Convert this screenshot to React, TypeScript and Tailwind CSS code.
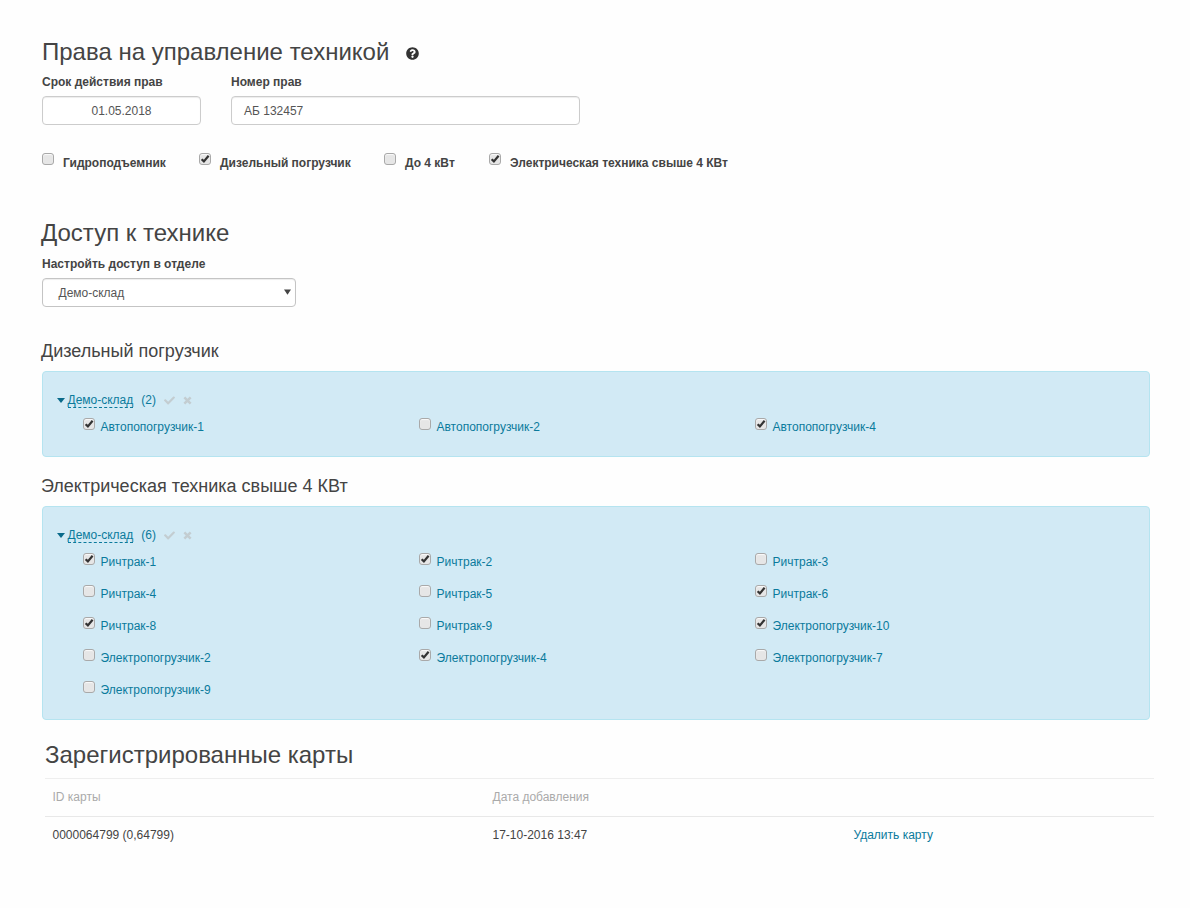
import { FaCheck, FaQuestionCircle } from "react-icons/fa";

const font = { fontFamily: '"Liberation Sans", Arial, sans-serif' };

function Box({ checked }: { checked?: boolean }) {
  return (
    <span className="relative block w-[12px] h-[12px] shrink-0 rounded-[3px] border border-[#a9a9a9] bg-[#e6e6e6] shadow-[inset_0_1px_1px_rgba(255,255,255,0.8)]">
      {checked && (
        <svg viewBox="0 0 12 12" className="absolute left-[-1px] top-[-1px] w-[12px] h-[12px]">
          <path d="M2.6 6.2 L4.9 8.4 L9.6 2.8" fill="none" stroke="#333333" strokeWidth="2.2" />
        </svg>
      )}
    </span>
  );
}

function Machine({ name, checked }: { name: string; checked?: boolean }) {
  return (
    <div className="flex h-[32px] items-start">
      <Box checked={checked} />
      <span className="ml-[5.5px] text-[12px] leading-[18px] text-[#0a7a9c]">{name}</span>
    </div>
  );
}

function Group({ count, items, tall }: { count: number; items: [string, boolean][]; tall?: boolean }) {
  return (
    <div className={`ml-[42px] mr-[40px] rounded-[4px] border border-[#b5e4f0] bg-[#d2eaf5] pl-[14px] pt-[20px] ${tall ? "h-[214px]" : "h-[86px]"}`}>
      <div className="flex items-center h-[18px] text-[12px] text-[#0a7a9c]">
        <svg viewBox="0 0 8 5" className="w-[8px] h-[5px] mr-[2.5px] mb-[2px]">
          <path d="M0 0H8L4 5Z" fill="#0a6a8a" />
        </svg>
        <span className="border-b border-dashed border-[#0a7a9c] leading-[13px]">Демо-склад</span>
        <span className="ml-[8px] mb-[2px]">({count})</span>
        <FaCheck className="ml-[8px] mb-[2px] w-[11px] h-[11px] text-[#c3cdd1]" />
        <svg viewBox="0 0 10 10" className="ml-[8.5px] mb-[2px] w-[9px] h-[9px]">
          <path d="M1.5 1.5 L8.5 8.5 M8.5 1.5 L1.5 8.5" fill="none" stroke="#c3cdd1" strokeWidth="2.8" />
        </svg>
      </div>
      <div className="grid grid-cols-[336px_336px_336px] pl-[26px] mt-[8px]">
        {items.map(([n, c]) => (
          <Machine key={n} name={n} checked={c} />
        ))}
      </div>
    </div>
  );
}

function Check({ label, checked, w }: { label: string; checked?: boolean; w: string }) {
  return (
    <div className={`flex items-start ${w}`}>
      <Box checked={checked} />
      <span className="ml-[9px] mt-[2px] text-[12px] leading-[16px] font-bold text-[#444444]">{label}</span>
    </div>
  );
}

export default function App() {
  return (
    <div style={font} className="w-[1190px] h-[908px] bg-[#fefefe] text-[#444444] overflow-hidden">
      <div className="pl-[42px] pt-[38px]">
        <h3 className="flex items-center text-[24px] leading-[28px] h-[28px] text-[#444444]">
          Права на управление техникой
          <FaQuestionCircle className="ml-[16.5px] mt-[3px] w-[13px] h-[13px] text-[#333333]" />
        </h3>
        <div className="flex mt-[8px]">
          <div className="w-[189px]">
            <div className="text-[12px] font-bold leading-[16px] h-[22px]">Срок действия прав</div>
            <div className="w-[159px] h-[29px] rounded-[4px] border border-[#cccccc] bg-white shadow-[inset_0_1px_1px_rgba(0,0,0,0.075)] flex items-center justify-center text-[12px] text-[#555555]">01.05.2018</div>
          </div>
          <div>
            <div className="text-[12px] font-bold leading-[16px] h-[22px]">Номер прав</div>
            <div className="w-[349px] h-[29px] rounded-[4px] border border-[#cccccc] bg-white shadow-[inset_0_1px_1px_rgba(0,0,0,0.075)] flex items-center pl-[12px] text-[12px] text-[#555555]">АБ 132457</div>
          </div>
        </div>
        <div className="flex mt-[28px] h-[16px]">
          <Check label="Гидроподъемник" w="w-[157px]" />
          <Check label="Дизельный погрузчик" checked w="w-[185px]" />
          <Check label="До 4 кВт" w="w-[105px]" />
          <Check label="Электрическая техника свыше 4 КВт" checked w="w-[300px]" />
        </div>
      </div>
      <h3 className="ml-[41px] mt-[50px] text-[24px] leading-[28px] text-[#444444]">Доступ к технике</h3>
      <div className="ml-[42px] mt-[9px] text-[12px] font-bold leading-[16px]">Настройть доступ в отделе</div>
      <div className="ml-[42px] mt-[6px] relative w-[254px] h-[29px] rounded-[4px] border border-[#c4c4c4] bg-white shadow-[inset_0_1px_1px_rgba(0,0,0,0.075)] flex items-center pl-[15.5px] text-[12px] text-[#555555]">
        Демо-склад
        <svg viewBox="0 0 8 6" className="absolute right-[4px] top-[10px] w-[7px] h-[6px]">
          <path d="M0 0H8L4 6Z" fill="#444444" />
        </svg>
      </div>
      <h4 className="ml-[41px] mt-[34px] text-[18px] leading-[20px] h-[20px] text-[#444444]">Дизельный погрузчик</h4>
      <div className="mt-[10px]">
        <Group
          count={2}
          items={[
            ["Автопопогрузчик-1", true],
            ["Автопопогрузчик-2", false],
            ["Автопопогрузчик-4", true],
          ]}
        />
      </div>
      <h4 className="ml-[41px] mt-[19px] text-[18px] leading-[20px] h-[20px] text-[#444444]">Электрическая техника свыше 4 КВт</h4>
      <div className="mt-[10px]">
        <Group
          tall
          count={6}
          items={[
            ["Ричтрак-1", true],
            ["Ричтрак-2", true],
            ["Ричтрак-3", false],
            ["Ричтрак-4", false],
            ["Ричтрак-5", false],
            ["Ричтрак-6", true],
            ["Ричтрак-8", true],
            ["Ричтрак-9", false],
            ["Электропогрузчик-10", true],
            ["Электропогрузчик-2", false],
            ["Электропогрузчик-4", true],
            ["Электропогрузчик-7", false],
            ["Электропогрузчик-9", false],
          ]}
        />
      </div>
      <h3 className="ml-[45px] mt-[21px] text-[24px] leading-[28px] h-[28px] text-[#444444]">Зарегистрированные карты</h3>
      <div className="ml-[45px] w-[1109px] mt-[9px] border-t border-[#eeeeee] text-[12px]">
        <div className="grid grid-cols-[440px_361px_1fr] h-[38px] pb-[2px] items-center pl-[7.5px] border-b border-[#e8e8e8] text-[#aaaaaa]">
          <span>ID карты</span>
          <span>Дата добавления</span>
          <span />
        </div>
        <div className="grid grid-cols-[440px_361px_1fr] h-[37px] pb-[2px] items-center pl-[7.5px] text-[#444444]">
          <span>0000064799 (0,64799)</span>
          <span>17-10-2016 13:47</span>
          <span className="text-[#0a7a9c]">Удалить карту</span>
        </div>
      </div>
    </div>
  );
}
